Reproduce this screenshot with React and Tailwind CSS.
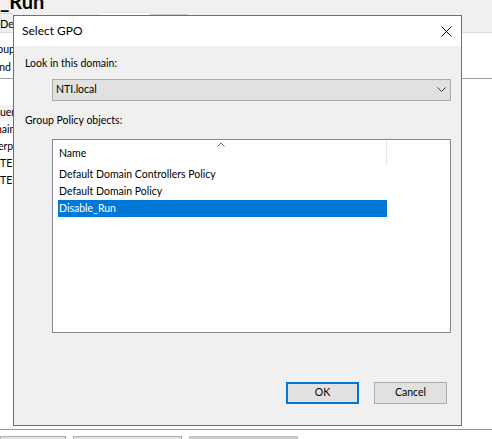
import React from "react";

export default function App() {
  const font = { fontFamily: "Lato, 'Noto Sans', sans-serif" };
  return (
    <div className="relative w-[492px] h-[439px] overflow-hidden bg-white text-[10.5px] text-black" style={font}>
      {/* Background window */}
      <div className="flex flex-col h-full">
        <div className="h-[33px] bg-[#f0f0f0] border-b border-[#dadada] flex flex-col">
          <div className="h-[13px] w-[60px] overflow-hidden relative">
            <div className="text-[20px] font-bold leading-none mt-[-9px] whitespace-nowrap">_Run</div>
          </div>
          <div className="flex-1 flex items-end">
            <div className="h-[19px] w-[13px] overflow-hidden border-t border-[#d9d9d9] bg-[#f0f0f0] flex items-center">
              <span className="leading-none text-[11px] whitespace-nowrap">Det</span>
            </div>
            <div className="h-[20px] w-[50px] ml-[87px] border-t border-[#e6e6e6] bg-white"></div>
            <div className="h-[18px] w-[38px] border-t border-[#c8c8c8]"></div>
          </div>
        </div>
        <div className="h-[46px] border-b border-[#a0a0a0] flex flex-col pt-[8px]">
          <div className="w-[13px] overflow-hidden">
            <div className="h-[17px] flex items-center ml-[-14px] whitespace-nowrap">Group</div>
            <div className="h-[19px] flex items-center ml-[-6px] whitespace-nowrap">and</div>
          </div>
        </div>
        <div className="flex flex-col pt-[26px] w-[13px] overflow-hidden">
          <div className="h-[16px] flex items-center bg-[#f2f2f2] ml-[-6px] whitespace-nowrap">quence</div>
          <div className="h-[17px] flex items-center ml-[-4px] whitespace-nowrap">nain</div>
          <div className="h-[17px] flex items-center ml-[-2px] whitespace-nowrap">erprise</div>
          <div className="h-[17px] flex items-center whitespace-nowrap">TERS</div>
          <div className="h-[17px] flex items-center whitespace-nowrap">TERS</div>
        </div>
        <div className="flex-1"></div>
        <div className="h-[10px] border-t border-[#999999] flex items-start pt-[6px] gap-[7px]">
          <div className="w-[66px] h-[8px] border border-[#adadad] bg-[#e1e1e1]"></div>
          <div className="w-[109px] h-[8px] border border-[#adadad] bg-[#e1e1e1]"></div>
          <div className="w-[109px] h-[8px] border border-[#bfbfbf] bg-[#cccccc]"></div>
        </div>
      </div>

      {/* Dialog */}
      <div className="absolute left-[13px] top-[15px] w-[449px] h-[411px] border border-[#707070] bg-[#f0f0f0] flex flex-col">
        <div className="h-[30px] bg-white flex items-center justify-between pl-[8px] pr-[9px]">
          <span className="text-[12px]">Select GPO</span>
          <svg width="11" height="11" viewBox="0 0 11 11">
            <path d="M0.5 0.5 L10.5 10.5 M10.5 0.5 L0.5 10.5" stroke="#000" strokeWidth="1" fill="none" />
          </svg>
        </div>
        <div className="flex flex-col pl-[11px]">
          <div className="h-[16px] mt-[10px] flex items-center">Look in this domain:</div>
          <div className="ml-[27px] mt-[7px] w-[399px] h-[22px] border border-[#adadad] bg-[#e1e1e1] flex items-center justify-between pl-[3px] pr-[4px]">
            <span>NTI.local</span>
            <svg width="9" height="5" viewBox="0 0 9 5" className="mt-[-1px]">
              <path d="M0.5 0.5 L4.5 4.5 L8.5 0.5" stroke="#404040" strokeWidth="1" fill="none" />
            </svg>
          </div>
          <div className="h-[16px] mt-[12px] flex items-center">Group Policy objects:</div>
          <div className="ml-[27px] mt-[10px] w-[399px] h-[194px] border border-[#828790] bg-white flex flex-col pt-[1px] pl-[5px]">
            <div className="relative h-[25px] w-[329px] flex items-center pl-[1px] border-r border-[#e5e5e5]">
              <span className="mt-[1px]">Name</span>
              <svg width="8" height="5" viewBox="0 0 8 5" className="absolute left-[159px] top-[1px]">
                <path d="M0.5 4.5 L4 1 L7.5 4.5" stroke="#6d6d6d" strokeWidth="1" fill="none" />
              </svg>
            </div>
            <div className="h-[17px] w-[329px] flex items-center pl-[1px]">Default Domain Controllers Policy</div>
            <div className="h-[17px] w-[329px] flex items-center pl-[1px]">Default Domain Policy</div>
            <div className="h-[17px] w-[329px] flex items-center pl-[1px] bg-[#0078d7] text-white">Disable_Run</div>
          </div>
          <div className="flex justify-end mt-[49px] pr-[14px] gap-[15px]">
            <div className="w-[73px] h-[22px] border-2 border-[#0078d7] bg-[#e1e1e1] flex items-center justify-center">OK</div>
            <div className="w-[73px] h-[22px] border border-[#adadad] bg-[#e1e1e1] flex items-center justify-center">Cancel</div>
          </div>
        </div>
      </div>
    </div>
  );
}
